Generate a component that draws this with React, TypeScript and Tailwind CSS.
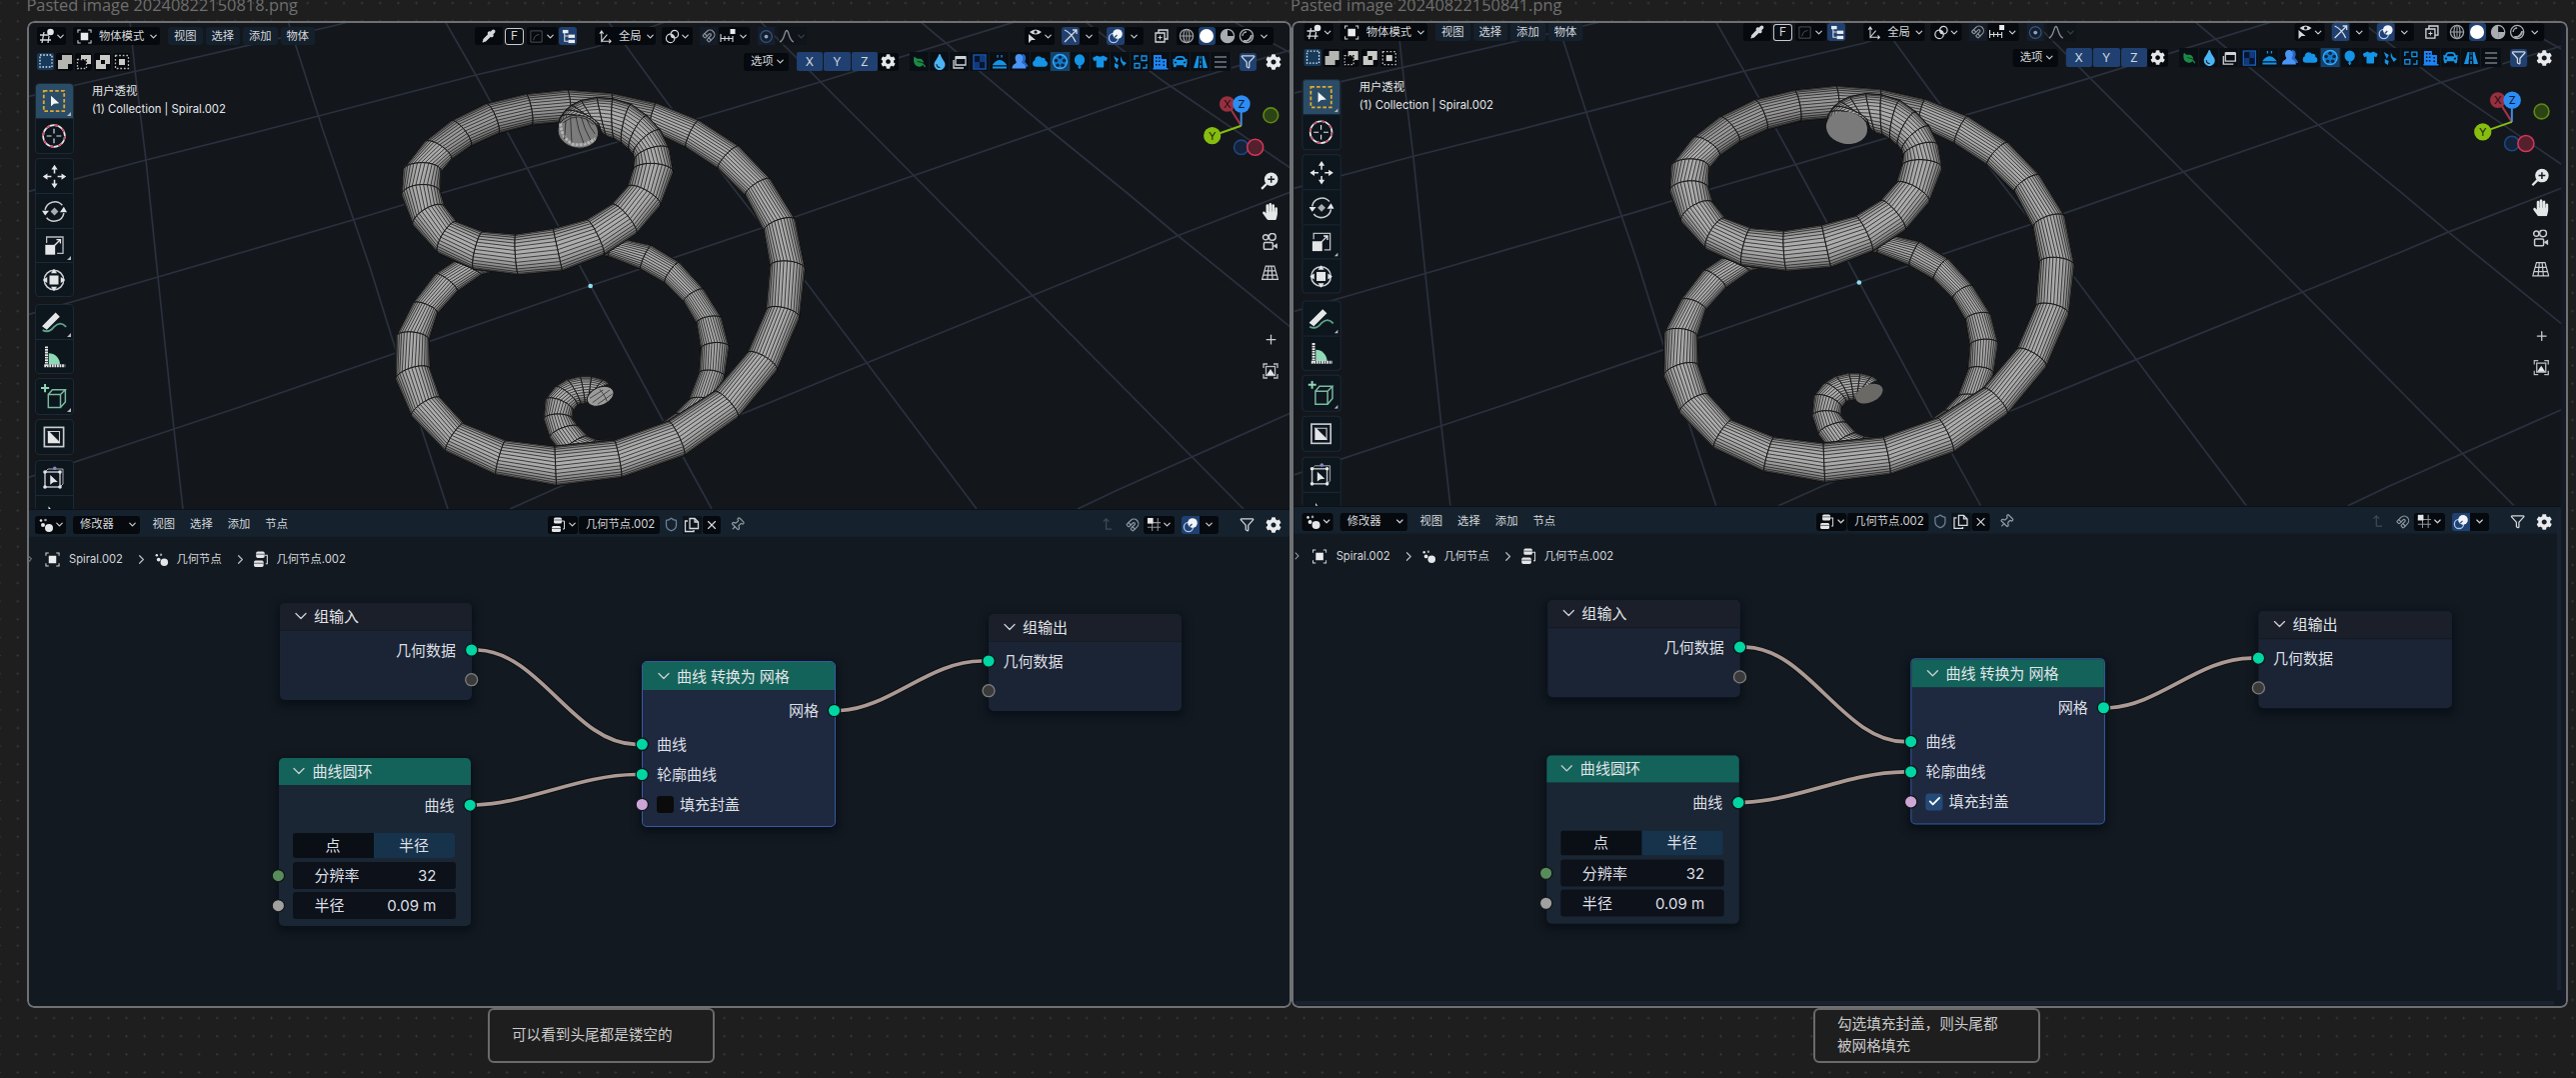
import React from "react";
import { ChevronDown, ChevronRight, Pipette, Magnet, Filter, Shield, Copy, X, Pin, Plus, Check } from "lucide-react";
import { FaCog, FaLeaf, FaTint, FaCloud, FaTshirt, FaCar, FaHandPaper } from "react-icons/fa";

/* ---------- tube geometry ---------- */

// Each ring is [outer x, outer y, inner x, inner y], from the upper end of the spiral to the lower end.
const RINGS: number[][] = [
  [563, 172, 687, 196], [570, 145, 686, 178], [584, 124, 687, 170], [604, 106, 690, 172], [634, 91, 695, 188],
  [682, 82, 710, 200], [730, 86, 733, 207], [785, 103, 757, 222], [833, 138, 778, 240], [873, 182, 790, 256],
  [900, 238, 793, 272], [911, 308, 788, 300], [872, 408, 772, 350], [800, 492, 725, 402], [702, 555, 650, 448],
  [578, 603, 550, 475], [446, 615, 438, 492], [312, 598, 340, 484], [205, 550, 262, 455], [130, 468, 226, 410],
  [95, 378, 213, 368], [98, 300, 213, 308], [163, 215, 243, 272], [243, 152, 302, 230], [348, 100, 385, 192],
  [467, 71, 485, 166], [592, 58, 600, 155], [725, 68, 722, 155], [860, 98, 838, 180], [988, 150, 948, 233],
  [1108, 228, 1045, 297], [1203, 327, 1127, 378], [1278, 450, 1182, 485], [1307, 598, 1200, 590], [1290, 745, 1188, 720],
  [1222, 902, 1132, 848], [1105, 1043, 1033, 964], [944, 1157, 895, 1053], [755, 1223, 733, 1110], [560, 1247, 555, 1128],
  [378, 1215, 408, 1110], [228, 1145, 283, 1060], [125, 1040, 213, 984], [77, 930, 182, 898], [78, 800, 178, 812],
  [128, 700, 203, 732], [195, 612, 262, 666], [250, 575, 335, 615], [380, 530, 430, 590], [500, 500, 520, 560],
  [620, 492, 620, 550], [735, 500, 715, 560], [845, 525, 812, 598], [930, 577, 885, 640], [1003, 658, 942, 697],
  [1057, 745, 980, 762], [1079, 832, 992, 838], [1065, 922, 986, 910], [1035, 1000, 955, 990], [985, 1075, 915, 1030],
  [860, 1150, 830, 1090], [740, 1180, 740, 1112], [640, 1170, 680, 1108], [575, 1150, 655, 1098], [540, 1105, 628, 1070],
  [521, 1050, 609, 1048], [525, 990, 610, 1025], [555, 950, 622, 1008], [590, 928, 632, 1003], [630, 918, 645, 1002],
  [665, 918, 654, 998], [702, 928, 656, 992], [722, 942, 655, 990],
];
const SIDES = 16;

type Ring = { mx: number; my: number; hx: number; hy: number; bx: number; by: number };

const rings: Ring[] = RINGS.map((r, i) => {
  const a = RINGS[Math.max(0, i - 1)];
  const b = RINGS[Math.min(RINGS.length - 1, i + 1)];
  const dx = b[0] + b[2] - a[0] - a[2];
  const dy = b[1] + b[3] - a[1] - a[3];
  const len = Math.hypot(dx, dy) || 1;
  const tx = dx / len;
  const ty = dy / len;
  const w = Math.hypot(r[0] - r[2], r[1] - r[3]);
  const k = -ty * 0.2 * w + (i > 14 && i < 28 ? 6 : 0);
  return {
    mx: (r[0] + r[2]) / 2, my: (r[1] + r[3]) / 2,
    hx: (r[0] - r[2]) / 2, hy: (r[1] - r[3]) / 2,
    bx: tx * k, by: ty * k,
  };
});

const at = (r: Ring, j: number) => {
  const t = (j / SIDES) * Math.PI;
  const c = Math.cos(t);
  const s = Math.sin(t);
  return `${(r.mx + r.hx * c + r.bx * s).toFixed(1)} ${(r.my + r.hy * c + r.by * s).toFixed(1)}`;
};

const shade = (i: number, j: number) => {
  const t = ((j + 0.5) / SIDES) * Math.PI;
  const r = rings[i];
  const w = Math.hypot(r.hx, r.hy);
  const nx = (r.hx * Math.cos(t)) / w;
  const ny = (r.hy * Math.cos(t)) / w;
  const v = 66 + 106 * Math.pow(Math.sin(t), 0.8) - 14 * ny - 6 * nx - (i > 21 && i < 28 ? 20 : 0);
  const g = Math.max(30, Math.min(190, Math.round(v)));
  return `rgb(${g},${g},${g})`;
};

const ringPath = (r: Ring) => "M" + Array.from({ length: SIDES + 1 }, (_, j) => at(r, j)).join("L");

function Tube() {
  const out: React.ReactElement[] = [];
  for (let i = rings.length - 2; i >= 0; i--) {
    const a = rings[i];
    const b = rings[i + 1];
    for (let j = 0; j < SIDES; j++) {
      const f = shade(i, j);
      out.push(
        <path key={`f${i}-${j}`} d={`M${at(a, j)}L${at(a, j + 1)}L${at(b, j + 1)}L${at(b, j)}Z`} fill={f} stroke={f} strokeWidth={0.8} />
      );
    }
    let lines = "";
    for (let j = 1; j < SIDES; j++) lines += `M${at(a, j)}L${at(b, j)}`;
    out.push(<path key={`l${i}`} d={lines} stroke="#202020" strokeWidth={2.2} fill="none" />);
    out.push(
      <path key={`e${i}`} d={`${ringPath(a)}${ringPath(b)}M${at(a, 0)}L${at(b, 0)}M${at(a, SIDES)}L${at(b, SIDES)}`} stroke="#0c0c0c" strokeWidth={2.8} fill="none" />
    );
  }
  return <>{out}</>;
}

function Spiral({ filled }: { filled: boolean }) {
  return (
    <g transform="translate(370 70) scale(0.33333)">
      <Tube />
      {filled ? (
        <>
          <ellipse cx={625} cy={185} rx={62} ry={48} transform="rotate(10 625 185)" fill="#7a7a7a" />
          <ellipse cx={692} cy={981} rx={43} ry={26} transform="rotate(-24 692 981)" fill="#6b6966" />
        </>
      ) : (
        <>
          <ellipse cx={625} cy={185} rx={61} ry={49} transform="rotate(10 625 185)" fill="#7c7c7c" stroke="#161616" strokeWidth={2.6} />
          <path d="M572 160Q574 205 612 224Q650 228 676 206" stroke="#b4b4b4" strokeWidth={9} strokeDasharray="9 3" fill="none" />
          <path d="M580 158Q626 120 672 164M588 152L584 208M602 142L606 218M618 138Q624 180 642 220M634 140Q644 178 662 210M650 146Q660 172 676 192" stroke="#202020" strokeWidth={2.2} fill="none" />
          <ellipse cx={692} cy={979} rx={42} ry={27} transform="rotate(-24 692 979)" fill="#9b9b9b" stroke="#161616" strokeWidth={3} />
          <path d="M660 985L700 960M668 998L720 960M684 1002L728 972M690 958Q705 975 712 994" stroke="#2a2a2a" strokeWidth={2.2} fill="none" />
        </>
      )}
      <circle cx={662} cy={648} r={7} fill="#8fdcec" />
    </g>
  );
}

const GRID = [
  "130,21 135,70 146,160 158,277 174,429 183,509",
  "288,21 323,130 370,267 395,347 423,433 448,509",
  "445,21 476,75 530,173 591,286 663,420 712,509",
  "608,21 667,102 807,283 977,509",
  "760,21 869,130 1244,509",
  "920,21 1050,130 1130,195 1180,237 1291,327",
  "1085,21 1162,80 1291,168",
  "1233,21 1291,53",
  "27,97 76,85 337,25 352,21",
  "27,192 146,160 265,130 476,75 596,47 668,21",
  "27,315 158,277 240,253 370,215 442,193 700,118 817,83 1018,21",
  "27,478 174,429 240,407 370,362 590,286 795,217 1048,129 1169,87 1291,50",
  "510,509 557,488 747,412 830,378 1130,256 1180,235 1291,192",
  "1078,509 1118,490 1291,413",
];

/* ---------- small icons ---------- */

function Ico({ s = 16, children, c = "#d5d8dc", w = 1.3 }: { s?: number; children: React.ReactNode; c?: string; w?: number }) {
  return (
    <svg width={s} height={s} viewBox="0 0 16 16" fill="none" stroke={c} strokeWidth={w} className="shrink-0">
      {children}
    </svg>
  );
}
const Chev = () => <ChevronDown size={11} strokeWidth={2.6} className="shrink-0 text-[#c9ccd0]" />;
const ViewportIcon = () => (
  <Ico><path d="M1 7h9M1 12h11M5 4L3 15M10 8L9 15" /><circle cx={11.5} cy={4} r={3.3} fill="#e4e6e8" stroke="none" /></Ico>
);
const ObjectIcon = ({ s = 15 }: { s?: number }) => (
  <Ico s={s}><path d="M1 4V1h3M12 1h3v3M15 12v3h-3M4 15H1v-3" strokeWidth={1.1} /><rect x={4} y={4} width={8} height={8} fill="#e9ebee" stroke="none" /></Ico>
);
const NodesIcon = ({ s = 16 }: { s?: number }) => (
  <Ico s={s}>
    <g stroke="none" fill="#e4e6e8"><circle cx={11} cy={11} r={4} /><circle cx={5} cy={8} r={2} /><circle cx={3} cy={3.5} r={1.3} /><circle cx={7.5} cy={3} r={1.3} fill="#9a9da2" /></g>
  </Ico>
);
const TreeIcon = ({ s = 17 }: { s?: number }) => (
  <Ico s={s}>
    <g stroke="none" fill="#e4e6e8"><rect x={3} y={0.5} width={8} height={6} rx={1.5} /><rect x={1} y={9} width={9} height={6} rx={1.5} /></g>
    <path d="M11 4h2.5v8H12" strokeWidth={1} /><path d="M3 3h8M1 11.5h9" stroke="#4a4f57" strokeWidth={0.8} />
  </Ico>
);
const OverlayIcon = () => (
  <Ico><circle cx={6} cy={10} r={4.6} stroke="#a9c4ee" /><circle cx={10} cy={6} r={4.8} fill="#f2f4f7" stroke="none" /><path d="M7 9.5l2.5-2.5" stroke="#26508c" /></Ico>
);

/* ---------- header of the 3D viewport ---------- */

const box = "flex h-[18px] shrink-0 items-center rounded-[3px] bg-[#06090d]";
const blue = "flex h-[18px] shrink-0 items-center justify-center rounded-[3px] bg-[#1f4071]";

function ViewportHeader() {
  return (
    <div className="flex h-[18px] items-center pl-[10px] text-[11.3px] whitespace-nowrap text-[#d3d6da]">
      <div className={`${box} w-[29px] justify-between px-[2px]`}><ViewportIcon /><Chev /></div>
      <div className={`${box} ml-[7px] w-[87px] pl-[4px]`}>
        <ObjectIcon /><span className="ml-[7px]">物体模式</span><span className="ml-[4px]"><Chev /></span>
      </div>
      <div className="ml-[8px] flex gap-[3px]">
        {["视图", "选择", "添加", "物体"].map((t) => (
          <div key={t} className="flex h-[18px] w-[34.5px] items-center justify-center rounded-[3px] bg-[#15202d]">{t}</div>
        ))}
      </div>
      <div className={`${box} ml-[160px] w-[28px] justify-center`}><Pipette size={14} className="fill-[#d5d8dc]" /></div>
      <div className="ml-[2px] flex h-[17px] w-[19px] items-center justify-center rounded-[3px] border-[1.5px] border-[#c9ccd0] bg-[#0a0d12] text-[12px]">F</div>
      <div className={`${box} ml-[3px] w-[31px] justify-between px-[2px]`}>
        <Ico s={15} c="#4e5359"><path d="M2 2h12v12H2zM5 12Q6 6 11 6" strokeWidth={1} /></Ico><Chev />
      </div>
      <div className={`${blue} ml-[1px] w-[18px]`}>
        <Ico s={15}><path d="M4 4v9h4M4 7.5h4" strokeWidth={1.2} /><g fill="#e9ebee" stroke="none"><rect x={2} y={1} width={6} height={3.5} /><rect x={8} y={6} width={7} height={3.5} /><rect x={8} y={11.5} width={7} height={3.5} /></g></Ico>
      </div>
      <div className={`${box} ml-[18px] w-[61px] pl-[3px]`}>
        <Ico s={15}><path d="M4 14V3M2 5l2-3 2 3M4 13h10M12 11l2 2-2 2M4 13l6-7" strokeWidth={1.1} /></Ico>
        <span className="ml-[6px]">全局</span><span className="ml-[3px]"><Chev /></span>
      </div>
      <div className={`${box} ml-[6px] w-[31px] justify-between px-[3px]`}>
        <Ico s={15}><circle cx={6} cy={10} r={4.5} /><circle cx={10.5} cy={5.5} r={4} /><circle cx={8.3} cy={7.8} r={1} fill="#d5d8dc" /></Ico><Chev />
      </div>
      <div className="ml-[7px] flex h-[18px] w-[18px] items-center justify-center bg-[#131c28]"><Magnet size={14} className="text-[#8b9197]" /></div>
      <div className={`${box} ml-[1px] w-[31px] justify-between px-[1px]`}>
        <Ico s={16}><path d="M1 6v8M5 8v5M9 8v5M13 8v6M1 10.5h12" strokeWidth={1.1} /><rect x={10.5} y={1} width={5} height={5} fill="#e9ebee" stroke="none" /></Ico><Chev />
      </div>
      <div className="ml-[8px] flex h-[18px] w-[17px] items-center justify-center bg-[#131f30]">
        <Ico s={15} c="#3d5470"><circle cx={8} cy={8} r={6.2} /><circle cx={8} cy={8} r={2} fill="#8fa3bd" stroke="none" /></Ico>
      </div>
      <div className="ml-[4px] flex h-[18px] w-[28px] items-center justify-between bg-[#0e1319] opacity-60">
        <Ico s={16}><path d="M1 14Q4 13 6 6Q8 -1 10 6Q12 13 15 14" /></Ico><span className="opacity-40"><Chev /></span>
      </div>
      <div className={`${box} ml-[218px] w-[30px] justify-between px-[2px]`}>
        <Ico s={16}><path d="M3 4Q9 -1 15 4Q9 9 3 4Z" fill="#d5d8dc" stroke="none" /><circle cx={9} cy={4} r={1.6} fill="#0a0d12" stroke="none" /><path d="M2 6v9l3-3h4z" fill="#d5d8dc" stroke="none" /></Ico><Chev />
      </div>
      <div className={`${blue} ml-[7px] w-[18px]`}><Ico><path d="M2 2Q9 5 13 14M2 14L14 2M10 2h4v4" /></Ico></div>
      <div className={`${box} w-[19px] justify-center`}><Chev /></div>
      <div className={`${blue} ml-[8px] w-[18px]`}><OverlayIcon /></div>
      <div className={`${box} w-[19px] justify-center`}><Chev /></div>
      <div className="ml-[9px] flex h-[18px] w-[17px] items-center justify-center"><Ico><path d="M5 5V2h9v9h-3" /><path d="M2 5h9v9H2z" /><path d="M6.5 7.5v4M4.5 9.5h4" strokeWidth={1} /></Ico></div>
      <div className={`${box} ml-[7px] w-[97px] justify-between pr-[4px] pl-[2px]`}>
        <Ico s={16} c="#9da1a6"><circle cx={8} cy={8} r={6.6} /><ellipse cx={8} cy={8} rx={3} ry={6.6} /><path d="M1.5 8h13M8 1.5v13" strokeWidth={1} /></Ico>
        <div className={`${blue} w-[17px]`}><span className="h-[14px] w-[14px] rounded-full bg-white" /></div>
        <Ico s={16} c="#a9adb1"><circle cx={8} cy={8} r={6.6} /><path d="M8 1.400a6.600 6.600 0 0 0 0 13.200z" fill="#a9adb1" stroke="none" /><path d="M8 8h6.600a6.600 6.600 0 0 1-6.600 6.600z" fill="#a9adb1" stroke="none" /></Ico>
        <Ico s={16} c="#a9adb1"><circle cx={8} cy={8} r={6.6} /><path d="M4 8a4 4 0 0 1 4-4" /><path d="M5 13a7 7 0 0 0 8-6" strokeWidth={2} /></Ico>
        <Chev />
      </div>
    </div>
  );
}

const B = "#1593e6";
const ADDONS: React.ReactNode[] = [
  <FaLeaf size={12} color="#1c8a45" className="-scale-x-100" />,
  <FaTint size={16} color="#4bb4f3" />,
  <Ico s={16} c="#cfd2d6"><path d="M4 3h10v8H4z" /><path d="M2 6v8h10" /><path d="M4 3.500h10" strokeWidth={3} /></Ico>,
  <Ico s={16} c="#1a5fc0"><rect x={2} y={1} width={12} height={14} fill="#07152e" /><path d="M8 2h5v6H8zM3 8h5v6H3z" fill="#123a7a" stroke="none" /></Ico>,
  <Ico s={16} c={B}><path d="M2 10.500Q8 3 14 10.500Z" fill={B} /><path d="M6 1v2.500M10 1v2.500" /><path d="M1 13.500h14" strokeWidth={2} /></Ico>,
  <Ico s={17} c="none"><path d="M10 1c3.500 0 4 4 2.500 7 0 1.500 3 2 3 5H8z" fill="#2466c4" /><path d="M7 1c4 0 4.500 4.500 2.500 7.500 0 2 4 1.500 4 6H.5c0-4.500 4-4 4-6C2.500 5.500 3 1 7 1z" fill="#4a94f5" /></Ico>,
  <FaCloud size={15} color={B} />,
  <Ico s={17} c="#35a9f5"><circle cx={8} cy={8} r={6.6} fill="#1279c9" /><g fill="#0c2747" stroke="none"><circle cx={8} cy={4} r={1.7} /><circle cx={4.2} cy={7} r={1.7} /><circle cx={11.8} cy={7} r={1.7} /><circle cx={5.7} cy={11.5} r={1.7} /><circle cx={10.3} cy={11.5} r={1.7} /></g></Ico>,
  <Ico s={16} c={B}><ellipse cx={8} cy={6} rx={4.5} ry={5} fill={B} /><path d="M8 11v4M6.500 13h3" /></Ico>,
  <FaTshirt size={15} color={B} />,
  <Ico s={16} c="none"><path d="M2 2l5 3-2 4zM9 2l2 5 4 2-3 3-3-5zM3 9l4 2-1 4-3-2z" fill={B} /></Ico>,
  <Ico s={16} c={B}><path d="M2 6V2h4M9 2h5v4.500H9zM2 9.500h5V14H2zM14 10v4h-4" /></Ico>,
  <Ico s={16} c="none"><path fillRule="evenodd" d="M1 1h8v4h5v9h1.500v1.500H.5V14H1zM3 3v1.500h1.500V3zM6 3v1.500h1.500V3zM3 6.500V8h1.500V6.500zM6 6.500V8h1.500V6.500zM3 10v1.500h1.500V10zM6 10v1.500h1.500V10zM10.500 7v1.500H12V7zM10.500 10.500V12H12v-1.500z" fill="#1d84f5" /></Ico>,
  <FaCar size={15} color={B} />,
  <Ico s={16} c="none"><path d="M4.500 2h2L5.500 14H1zM9.500 2h2L15 14h-4.500zM7.500 2h1v3h-1zM7.400 6.500h1.200v3H7.400zM7.200 11h1.600v3H7.200z" fill={B} /></Ico>,
  <Ico s={16} c="#777c83"><path d="M2 3h12M2 8h12M2 13h12" strokeWidth={1.5} /></Ico>,
];

function SelectModes() {
  return (
    <div className="flex gap-[2px]">
      <div className="flex h-[17px] w-[17px] items-center justify-center rounded-[2px] bg-[#173a5a]"><Ico s={16} c="#d9e4ee"><rect x={2} y={2} width={12} height={12} strokeDasharray="1.6 1.6" /></Ico></div>
      <div className={`${box} w-[17px] justify-center`}><Ico c="none"><path d="M5 1h10v9h-4v5H1V6h4z" fill="#b5b5b1" /></Ico></div>
      <div className={`${box} w-[17px] justify-center`}><Ico c="#b5b5b1"><rect x={1.5} y={5.5} width={9} height={9} strokeDasharray="1.6 1.6" /><path d="M5 1h10v9h-4V5H5z" fill="#c9c9c5" stroke="none" /></Ico></div>
      <div className={`${box} w-[17px] justify-center`}><Ico c="none"><path fillRule="evenodd" d="M5 1h10v9h-4v5H1V6h4zM6 6v4h4V6z" fill="#c9c9c5" /></Ico></div>
      <div className={`${box} w-[17px] justify-center`}><Ico c="#b5b5b1"><rect x={1.5} y={1.5} width={13} height={13} strokeDasharray="1.8 1.8" /><rect x={5} y={5} width={6} height={6} fill="#c9c9c5" stroke="none" /></Ico></div>
    </div>
  );
}

function ToolSettings() {
  return (
    <div className="mt-[7px] flex h-[19px] items-center pl-[10px] text-[11.3px] whitespace-nowrap text-[#d3d6da]">
      <SelectModes />
      <div className={`${box} ml-[614px] w-[45px] justify-between pr-[3px] pl-[7px]`}>选项<Chev /></div>
      <div className="ml-[7.5px] flex gap-px text-[12px]">
        {["X", "Y", "Z"].map((t) => (
          <div key={t} className="flex h-[19px] w-[26.5px] items-center justify-center rounded-[2px] bg-[#1f4071]">{t}</div>
        ))}
      </div>
      <div className={`${box} w-[21px] justify-center`}><FaCog size={15} color="#e4e6e8" /></div>
      <div className="ml-[11px] flex">
        {ADDONS.map((n, i) => (
          <div key={i} className={`flex h-[19px] w-[20.1px] items-center justify-center border-r border-[#151b24] ${i === 7 ? "bg-[#16416b]" : "bg-[#0a0f15]"}`}>{n}</div>
        ))}
      </div>
      <div className={`${blue} ml-[8px] w-[17px]`}><Filter size={15} /></div>
      <div className="ml-[9px]"><FaCog size={16} color="#e9ebee" /></div>
    </div>
  );
}

/* ---------- tool shelf ---------- */

const M = "#8fd9b6";
const W = "#e4e6e8";
const TOOLS: { top: string; items: { icon: React.ReactNode; on?: boolean; more?: boolean }[] }[] = [
  { top: "", items: [
    { on: true, more: true, icon: <Ico s={24} c="#e3a92f" w={1.2}><rect x={1.2} y={1.2} width={13.6} height={13.6} strokeDasharray="2.4 1.4" /><path d="M6 4.500v7l2-1.600 3.500-.4z" fill="#f2f4f6" stroke="none" /></Ico> },
    { icon: <Ico s={26} c={W} w={1}><circle cx={8} cy={8} r={6.7} /><circle cx={8} cy={8} r={6.7} stroke="#c94f66" strokeDasharray="2.6 2.66" /><path d="M8 3.500v3M8 9.500v3M3.500 8h3M9.500 8h3" strokeWidth={0.7} /></Ico> },
  ] },
  { top: "mt-[4.5px]", items: [
    { icon: <Ico s={25} c={W} w={1}><g fill={W} stroke="none"><path d="M8 .5l2 3H6zM8 15.500l2-3H6zM.5 8l3-2v4zM15.500 8l-3-2v4z" /></g><path d="M8 3v3M8 10v3M3 8h3M10 8h3" /></Ico> },
    { icon: <Ico s={25} c="#c9ccd0" w={1}><path d="M2 7a6.300 6.300 0 0 1 11-3M14 9a6.300 6.300 0 0 1-11 3" /><path d="M0 7.500h4.500L2 10.500zM16 8.500h-4.500L14 5z" fill={W} stroke="none" /><path d="M8 5.500L10.500 8 8 10.500 5.500 8z" fill="#a9adb1" stroke="none" /></Ico> },
    { more: true, icon: <Ico s={21} c="#b9bdc2" w={1}><path d="M2 6V1.500h12.500V14H10" /><rect x={1} y={7.5} width={7.5} height={7.5} fill={W} stroke="none" /><path d="M8 8l4-4M9.500 3.500h3v3" stroke={W} /></Ico> },
    { icon: <Ico s={24} c="#c9ccd0" w={1}><circle cx={8} cy={8} r={6.5} /><rect x={5} y={5} width={6} height={6} fill={W} stroke="none" /><path d="M8 .5l2 3H6zM8 15.500l2-3H6zM.5 8l3-2v4zM15.500 8l-3-2v4z" fill={W} stroke="none" /></Ico> },
  ] },
  { top: "mt-[6.5px]", items: [
    { more: true, icon: <Ico s={26} c="#5aa58a" w={1.1}><path d="M1 13Q5 15 8 11Q12 7 15.500 11" /><path d="M1.500 10.500L9 3l1.800 1.800L3.500 12z" fill={W} stroke={W} /></Ico> },
    { icon: <Ico s={24} c={W} w={1}><path d="M4.500 13V5.500A7.500 7.500 0 0 1 12 13z" fill={M} stroke="none" /><path d="M3 1v13M1.500 13.800h14" strokeWidth={2} strokeDasharray="1.2 0.5" /></Ico> },
  ] },
  { top: "mt-[4px]", items: [
    { more: true, icon: <Ico s={26} c="#79b9a0" w={0.9}><path d="M4.500 6.500h7.500v8H4.500zM4.500 6.500L7 3.500h8L12 6.500M15 3.500v7.500l-3 3.500" /><path d="M2.500 0v5M0 2.500h5" stroke={M} strokeWidth={1.2} /></Ico> },
  ] },
  { top: "mt-[4.5px]", items: [
    { icon: <Ico s={22} c="#c9ccd0" w={1.2}><rect x={1} y={1} width={14} height={14} /><path d="M4 4h8v8z" strokeWidth={0.8} /><path d="M3.500 3.500v9h9z" fill={W} stroke="none" /></Ico> },
  ] },
  { top: "mt-[4.5px]", items: [
    { icon: <Ico s={24} c="#b9bdc2" w={1}><rect x={2} y={4} width={10} height={10} /><path d="M2 4l2-2h10v10l-2 2" strokeWidth={0.6} /><path d="M5.500 6v6.500l2-1.600 3-.3z" fill={W} stroke="none" /><g fill={W} stroke="none"><circle cx={2} cy={4} r={1.2} /><circle cx={12} cy={4} r={1.2} /><circle cx={2} cy={14} r={1.2} /><circle cx={12} cy={14} r={1.2} /></g><circle cx={8.5} cy={1.5} r={1.2} fill="#8a86c8" stroke="none" /></Ico> },
    { icon: <Ico s={22} c={W}><path d="M4 3v8l4-3z" fill={W} stroke="none" /></Ico> },
  ] },
];

function ToolShelf() {
  return (
    <div className="w-[38.5px]">
      {TOOLS.map((g, i) => (
        <div key={i} className={`${g.top} overflow-hidden rounded-[4px] border border-[#1b2936] bg-[#0d151d]`}>
          {g.items.map((t, j) => (
            <div key={j} className={`relative flex h-[34.3px] items-center justify-center ${j > 0 ? "border-t border-[#1b2936]" : ""} ${t.on ? "bg-[#2b4c66]" : ""}`}>
              {t.icon}
              {t.more && <svg width={4} height={4} viewBox="0 0 4 4" className="absolute right-[2px] bottom-[2px]"><path d="M4 0v4H0z" fill="#b5b8bc" /></svg>}
            </div>
          ))}
        </div>
      ))}
    </div>
  );
}

/* ---------- 3D viewport ---------- */

function Gizmo() {
  return (
    <g strokeWidth={1.6} fontFamily="Inter, sans-serif" fontSize={11} textAnchor="middle">
      <circle cx={1241.7} cy={147.3} r={7.2} fill="#14233a" stroke="#1e467e" />
      <path d="M1241.7 125.7L1228 104" stroke="#a83049" strokeWidth={2} />
      <circle cx={1227.7} cy={104} r={7.8} fill="#96303f" />
      <text x={1227.7} y={108} fill="#26090f">X</text>
      <path d="M1241.7 125.7V104" stroke="#3f8ae0" strokeWidth={2} />
      <path d="M1241.7 125.7L1213 135.7" stroke="#86bd10" strokeWidth={2} />
      <circle cx={1242} cy={104} r={8.7} fill="#2c8df4" />
      <text x={1242} y={108} fill="#061a35">Z</text>
      <circle cx={1212.7} cy={135.7} r={8.6} fill="#86bd10" />
      <text x={1212.7} y={139.7} fill="#1a2600">Y</text>
      <circle cx={1271.3} cy={115.3} r={7.4} fill="#2c4315" stroke="#5f8812" />
      <circle cx={1255.7} cy={147.3} r={8} fill="#54202e" stroke="#d23558" />
    </g>
  );
}

function Viewport({ filled }: { filled: boolean }) {
  return (
    <div className="relative h-[488px] w-[1264px] overflow-hidden bg-[#13171c]">
      <svg width={1264} height={488} viewBox="27 21 1264 488" className="absolute inset-0">
        {GRID.map((p, i) => (
          <polyline key={i} points={p} fill="none" stroke="#2a303d" strokeWidth={1.7} />
        ))}
        <Spiral filled={filled} />
        <Gizmo />
      </svg>
      <div className="relative pt-[6px]">
        <ViewportHeader />
        <ToolSettings />
        <div className="mt-[12px] flex pl-[8px]">
          <ToolShelf />
          <div className="mt-[-1px] ml-[18.5px] text-[11.3px] leading-[18px] text-[#e4e6e8]">
            <div>用户透视</div>
            <div>(1) Collection | Spiral.002</div>
          </div>
        </div>
      </div>
      <div className="absolute top-[151px] right-[11px] flex w-[20px] flex-col items-center gap-[13px]">
        <Ico s={18}><circle cx={9.5} cy={6.5} r={6} fill="#e4e6e8" stroke="none" /><path d="M5.500 10.500L1 15" stroke="#e4e6e8" strokeWidth={2} /><path d="M9.500 3.500v6M6.500 6.500h6" stroke="#15181d" /></Ico>
        <FaHandPaper size={17} color="#e4e6e8" />
        <Ico s={18} c="#c9ccd0"><circle cx={4.5} cy={3.8} r={2.3} /><circle cx={10.5} cy={3.5} r={3} /><rect x={3} y={8.5} width={8} height={6} rx={1} /><path d="M11 11.500l4-2.500v5z" fill="#c9ccd0" stroke="none" /></Ico>
        <Ico s={17} c="#c9ccd0"><path d="M4 2h8l3.500 12.500H.5zM2.500 6.500h11M1.500 10.500h13M6.700 2L5.500 14.500M9.300 2l1.200 12.500" strokeWidth={1.1} /></Ico>
      </div>
      <div className="absolute top-[311px] right-[10px] flex w-[20px] flex-col items-center gap-[16px]">
        <Plus size={15} className="text-[#c9ccd0]" />
        <Ico s={16} c="#b9bdc2"><path d="M1 5V1h4M11 1h4v4M15 11v4h-4M5 15H1v-4" /><rect x={3.5} y={3.5} width={9} height={9} /><path d="M4 12l4-6 4 6z" fill="#e4e6e8" stroke="none" /></Ico>
      </div>
    </div>
  );
}

/* ---------- node editor ---------- */

function NodeHeader() {
  return (
    <div className="flex h-[28px] items-center border-y border-t-[#0b1117] border-b-[#131f29] bg-[#15222d] pt-[3px] pl-[8px] text-[11.3px] whitespace-nowrap text-[#d3d6da]">
      <div className={`${box} w-[31px] justify-between px-[3px]`}><NodesIcon /><Chev /></div>
      <div className={`${box} ml-[7px] w-[67px] justify-between pr-[2px] pl-[7px]`}>修改器<Chev /></div>
      <div className="ml-[12.5px] flex gap-[15px]"><span>视图</span><span>选择</span><span>添加</span><span>节点</span></div>
      <div className={`${box} ml-[260px] w-[30px] justify-between px-[3px]`}><TreeIcon s={16} /><Chev /></div>
      <div className={`${box} ml-[1px] w-[81px] pl-[7px]`}>几何节点.002</div>
      <div className="ml-[2px] flex h-[18px] w-[19px] items-center justify-center"><Shield size={15} className="text-[#6f8296]" /></div>
      <div className="ml-[2px] flex h-[18px] w-[19px] items-center justify-center bg-[#0c131a]">
        <Ico s={16}><path d="M6 1.500h5l3.500 3.500v6.500H6zM11 1.500V5h3.500M4 4H1.500v10.500H10v-1.500" strokeWidth={1.3} /></Ico>
      </div>
      <div className={`${box} ml-px w-[18px] justify-center`}><X size={14} /></div>
      <Pin size={15} className="ml-[9px] rotate-45 text-[#8f979f]" />
      <div className="ml-[355px] flex h-[18px] w-[15px] items-center justify-center"><Ico s={15} c="#3d4b57"><path d="M4 5l3-3 3 3M7 2v11h6" /></Ico></div>
      <Magnet size={14} className="ml-[11px] text-[#8f979f]" />
      <div className={`${box} ml-[4px] w-[31px] justify-between px-[3px]`}>
        <Ico s={15} c="#8f9499"><path d="M6 1v14M12 1v14M1 6h14M1 11h14" strokeWidth={1.1} /><rect x={1} y={1} width={6} height={6} fill="#e4e6e8" stroke="none" /></Ico><Chev />
      </div>
      <div className={`${blue} ml-[7px] w-[18px] rounded-r-none`}><OverlayIcon /></div>
      <div className={`${box} w-[19px] justify-center rounded-l-none`}><Chev /></div>
      <Filter size={15} className="ml-[21px]" />
      <FaCog size={16} color="#e9ebee" className="ml-[11px]" />
    </div>
  );
}

function Breadcrumbs() {
  const sep = <ChevronRight size={15} className="text-[#b5b8bc]" />;
  return (
    <div className="relative mt-[13px] flex h-[18px] items-center text-[11.3px] whitespace-nowrap text-[#d3d6da]">
      <ChevronRight size={12} className="ml-[-3px] text-[#9a9da2]" />
      <div className="ml-[9px]"><ObjectIcon /></div>
      <span className="ml-[9px] w-[65px] text-[11.2px]">Spiral.002</span>
      {sep}
      <div className="ml-[5px]"><NodesIcon s={15} /></div>
      <span className="ml-[7.5px] w-[56.5px]">几何节点</span>
      {sep}
      <div className="ml-[5px]"><TreeIcon s={17} /></div>
      <span className="ml-[6.5px]">几何节点.002</span>
    </div>
  );
}

type SockProps = { x: number; y: number; kind: "geo" | "empty" | "bool" | "int" | "float" };
const SOCK = {
  geo: { f: "#00d6a3", s: "#0a1716" },
  empty: { f: "#3a3a3a", s: "#7d7d7d" },
  bool: { f: "#cca6d6", s: "#15131a" },
  int: { f: "#598c5c", s: "#0f1713" },
  float: { f: "#a1a1a1", s: "#15171a" },
};
const Sock = ({ x, y, kind }: SockProps) => (
  <circle cx={x} cy={y} r={kind === "empty" ? 6 : 6.2} fill={SOCK[kind].f} stroke={SOCK[kind].s} strokeWidth={1.3} />
);

function Title({ t, cls }: { t: string; cls: string }) {
  return (
    <div className={`flex items-center ${cls}`}>
      <ChevronDown size={20} strokeWidth={1.6} className="mx-[-1.5px] text-[#c9ccd0]" />
      <span className="ml-[5px] text-[#e1e4e8]">{t}</span>
    </div>
  );
}

const nodeBase = "absolute overflow-hidden rounded-[5px] shadow-[0_3px_8px_2px_rgba(0,8,14,0.55)]";
const LINKS = "M478 650C540 652 575 744 636 744.3M476 805C530 803 580 775 636 774.5M841 710.5C890 708 930 661 982 661";

function NodeEditor({ filled }: { filled: boolean }) {
  return (
    <div className="relative h-[510px] w-[1264px] bg-[#121921] font-['Inter','Noto_Sans_CJK_SC',sans-serif]">
      <NodeHeader />
      <Breadcrumbs />
      <div className="absolute inset-0 text-[15px] leading-none whitespace-nowrap text-[#dcdfe3]">
        <div className={`${nodeBase} top-[93.5px] left-[253px] h-[97px] w-[192px] bg-[#1b2434]`}>
          <Title t="组输入" cls="h-[28px] border-b border-[#141a26] bg-[#1a1f2a] pl-[12px]" />
          <div className="flex h-[39px] items-center justify-end pr-[16px]">几何数据</div>
        </div>
        <div className={`${nodeBase} top-[248.5px] left-[251.5px] h-[168px] w-[192px] bg-[#1b2634]`}>
          <Title t="曲线圆环" cls="h-[27.5px] bg-[#13635a] pl-[12px]" />
          <div className="flex h-[41px] items-center justify-end pr-[16px]">曲线</div>
          <div className="mr-[16px] ml-[14px] mt-[7px] flex h-[24.5px] overflow-hidden rounded-[3px]">
            <div className="flex flex-1 items-center justify-center bg-[#0a0e15]">点</div>
            <div className="flex flex-1 items-center justify-center bg-[#17324b]">半径</div>
          </div>
          <div className="mr-[15px] ml-[14px] mt-[4.5px] flex h-[27px] items-center justify-between rounded-[3px] bg-[#0d111a] pr-[19px] pl-[22px]"><span>分辨率</span><span>32</span></div>
          <div className="mr-[15px] ml-[14px] mt-[3px] flex h-[27px] items-center justify-between rounded-[3px] bg-[#0d111a] pr-[19px] pl-[22px]"><span>半径</span><span>0.09 m</span></div>
        </div>
        <div className={`${nodeBase} top-[152px] left-[614.5px] h-[165.5px] w-[194.5px] border-[1.5px] border-[#3659a0] bg-[#1e2940]`}>
          <Title t="曲线 转换为 网格" cls="h-[28px] bg-[#13635a] pl-[12.5px] tracking-[-0.1px]" />
          <div className="flex h-[40px] items-center justify-end pr-[16px]">网格</div>
          <div className="flex h-[28px] items-center pl-[14.5px]">曲线</div>
          <div className="mt-[2px] flex h-[28px] items-center pl-[14.5px]">轮廓曲线</div>
          <div className="mt-[2px] flex h-[28px] items-center pl-[14.5px]">
            <div className={`mr-[6px] flex h-[17px] w-[17px] items-center justify-center rounded-[3px] ${filled ? "bg-[#244a78]" : "bg-[#0b0b0c]"}`}>
              {filled && <Check size={14} strokeWidth={3.2} className="text-white" />}
            </div>
            填充封盖
          </div>
        </div>
        <div className={`${nodeBase} top-[104.5px] left-[961.5px] h-[97.5px] w-[193px] bg-[#1b2434]`}>
          <Title t="组输出" cls="h-[28.5px] border-b border-[#141a26] bg-[#1a1f2a] pl-[12.5px]" />
          <div className="flex h-[38px] items-center pl-[15px]">几何数据</div>
        </div>
      </div>
      <svg width={1264} height={510} viewBox="27 509 1264 510" className="absolute inset-0" fill="none">
        <path d={LINKS} stroke="#0b0f14" strokeWidth={5.5} />
        <path d={LINKS} stroke="#ab9a93" strokeWidth={3.7} />
        <Sock x={471.7} y={650} kind="geo" /><Sock x={471.7} y={679.7} kind="empty" />
        <Sock x={470.2} y={805.2} kind="geo" /><Sock x={278.4} y={875.7} kind="int" /><Sock x={278.4} y={905.7} kind="float" />
        <Sock x={834.5} y={710.5} kind="geo" /><Sock x={642.3} y={744.3} kind="geo" /><Sock x={642.3} y={774.5} kind="geo" /><Sock x={642.3} y={804.5} kind="bool" />
        <Sock x={989} y={661} kind="geo" /><Sock x={989} y={690.7} kind="empty" />
      </svg>
    </div>
  );
}

function Panel({ filled }: { filled: boolean }) {
  return (
    <div className={`relative h-[987px] shrink-0 overflow-hidden rounded-[7px] bg-[#121921] ${filled ? "w-[1277px]" : "w-[1265.5px]"}`}>
      <div className={filled ? "origin-top-left translate-x-[2.5px] translate-y-[-4px] scale-x-[1.003] scale-y-[1.0018]" : "ml-[0.5px]"}>
        <Viewport filled={filled} />
        <NodeEditor filled={filled} />
      </div>
      {filled && (
        <>
          <div className="absolute top-0 right-[1px] h-full w-[6px] bg-[#131a26]" />
          <div className="absolute top-[489px] right-[7px] h-[480px] w-[4px] bg-[#1a222f]" />
          <div className="absolute right-[14px] bottom-[3px] left-[4px] h-[4px] bg-[#1a2230]" />
        </>
      )}
      <div className="pointer-events-none absolute inset-0 rounded-[7px] border-2 border-[#6f7072]" />
    </div>
  );
}

function Note({ children, cls }: { children: React.ReactNode; cls: string }) {
  return (
    <div className={`flex h-[54.5px] w-[226.5px] shrink-0 items-center rounded-[6px] border-2 border-[#6a6a6a] bg-[#1e1e1e] pt-[2px] pl-[22px] text-[14.6px] leading-[21.8px] whitespace-nowrap text-[#c9c9c9] ${cls}`}>
      <div>{children}</div>
    </div>
  );
}

export default function App() {
  return (
    <div className="relative h-[1078px] w-[2577px] overflow-hidden bg-[#1e1e1e] bg-[radial-gradient(circle_at_center,#373737_0.9px,transparent_1.3px)] bg-[length:18.13px_18.13px] bg-[position:-9.4px_-6px] font-['Inter','Noto_Sans_CJK_SC',sans-serif]">
      <div className="flex h-[21px] pl-[26.5px] font-['Open_Sans',sans-serif] text-[16.4px] leading-[20px] whitespace-nowrap text-[#6e6e6e]">
        <div className="mt-[-5px] w-[1264.5px]">Pasted image 20240822150818.png</div>
        <div className="mt-[-5px]">Pasted image 20240822150841.png</div>
      </div>
      <div className="flex pl-[26.5px]">
        <Panel filled={false} />
        <Panel filled={true} />
      </div>
      <div className="flex pl-[488px]">
        <Note cls="">可以看到头尾都是镂空的</Note>
        <Note cls="ml-[1099.5px]">勾选填充封盖，则头尾都<br />被网格填充</Note>
      </div>
    </div>
  );
}
